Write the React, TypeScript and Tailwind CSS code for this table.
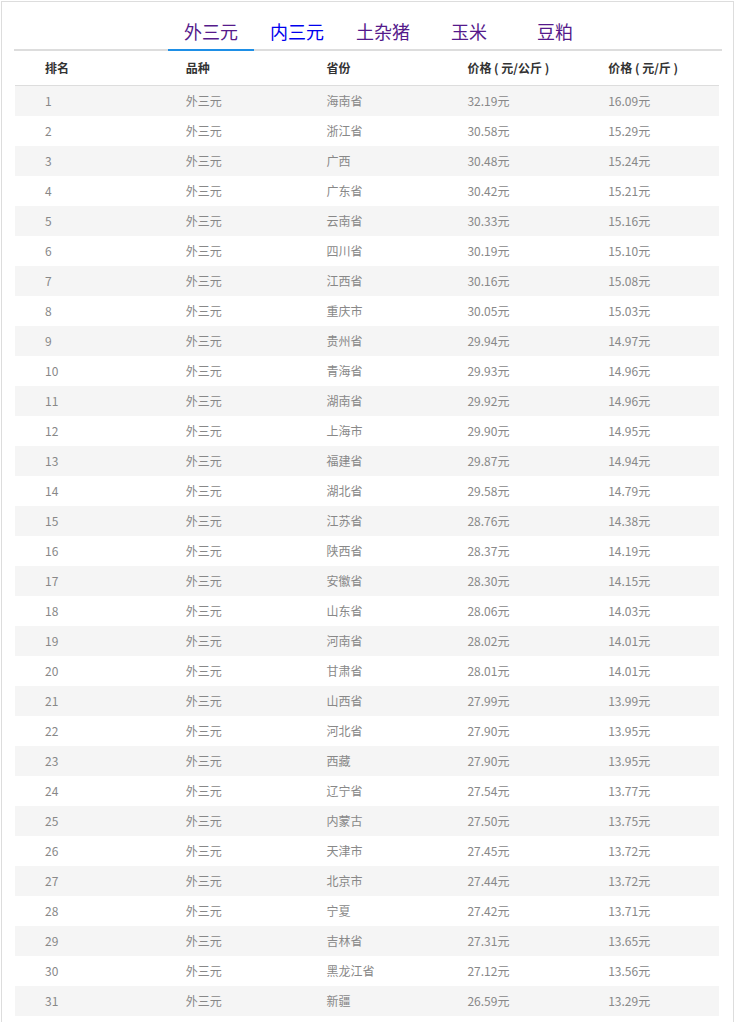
import React from "react";

const rows: [string, string, string][] = [
  ["海南省", "32.19", "16.09"],
  ["浙江省", "30.58", "15.29"],
  ["广西", "30.48", "15.24"],
  ["广东省", "30.42", "15.21"],
  ["云南省", "30.33", "15.16"],
  ["四川省", "30.19", "15.10"],
  ["江西省", "30.16", "15.08"],
  ["重庆市", "30.05", "15.03"],
  ["贵州省", "29.94", "14.97"],
  ["青海省", "29.93", "14.96"],
  ["湖南省", "29.92", "14.96"],
  ["上海市", "29.90", "14.95"],
  ["福建省", "29.87", "14.94"],
  ["湖北省", "29.58", "14.79"],
  ["江苏省", "28.76", "14.38"],
  ["陕西省", "28.37", "14.19"],
  ["安徽省", "28.30", "14.15"],
  ["山东省", "28.06", "14.03"],
  ["河南省", "28.02", "14.01"],
  ["甘肃省", "28.01", "14.01"],
  ["山西省", "27.99", "13.99"],
  ["河北省", "27.90", "13.95"],
  ["西藏", "27.90", "13.95"],
  ["辽宁省", "27.54", "13.77"],
  ["内蒙古", "27.50", "13.75"],
  ["天津市", "27.45", "13.72"],
  ["北京市", "27.44", "13.72"],
  ["宁夏", "27.42", "13.71"],
  ["吉林省", "27.31", "13.65"],
  ["黑龙江省", "27.12", "13.56"],
  ["新疆", "26.59", "13.29"],
];

const tabs = [
  { name: "外三元", cls: "text-[#551a8b]", active: true },
  { name: "内三元", cls: "text-[#0000ee]", active: false },
  { name: "土杂猪", cls: "text-[#551a8b]", active: false },
  { name: "玉米", cls: "text-[#551a8b]", active: false },
  { name: "豆粕", cls: "text-[#551a8b]", active: false },
];

export default function App() {
  return (
    <div
      className="bg-white min-h-[1022px]"
      style={{ fontFamily: '"Noto Sans CJK SC", "Noto Sans", sans-serif' }}
    >
      <div className="ml-[1px] mt-[1px] w-[733px] border border-[#dddddd] border-b-0 pl-[12px] pr-[11px] h-[1021px]">
        <div className="flex border-b-2 border-[#dddddd] pl-[154px]">
          {tabs.map((t) => (
            <div
              key={t.name}
              className={`w-[86px] h-[47px] pt-[12px] flex items-center justify-center text-[18px] -mb-[2px] ${t.cls} ${
                t.active ? "border-b-2 border-[#1e8fe6] h-[49px] pb-[2px] pt-[14px]" : ""
              }`}
            >
              {t.name}
            </div>
          ))}
        </div>
        <div className="ml-[1px] w-[704px]">
          <div className="grid grid-cols-5 h-[35px] border-b border-[#dddddd] text-[12px] font-bold text-[#333333] items-center">
            <div className="pl-[30px]">排名</div>
            <div className="pl-[30px]">品种</div>
            <div className="pl-[30px]">省份</div>
            <div className="pl-[30px]">价格 ( 元/公斤 )</div>
            <div className="pl-[30px]">价格 ( 元/斤 )</div>
          </div>
          {rows.map((r, i) => (
            <div
              key={i}
              className={`grid grid-cols-5 h-[30px] items-center text-[12px] text-[#888888] ${
                i % 2 === 0 ? "bg-[#f5f5f5]" : "bg-white"
              }`}
            >
              <div className="pl-[30px]">{i + 1}</div>
              <div className="pl-[30px]">外三元</div>
              <div className="pl-[30px]">{r[0]}</div>
              <div className="pl-[30px]">{r[1]}元</div>
              <div className="pl-[30px]">{r[2]}元</div>
            </div>
          ))}
        </div>
      </div>
    </div>
  );
}
